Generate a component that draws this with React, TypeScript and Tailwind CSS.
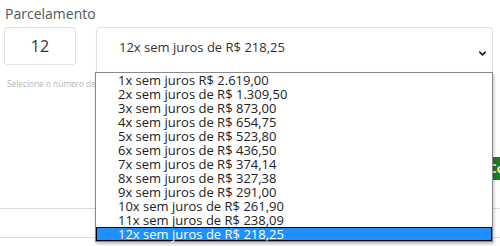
import { ChevronDown } from "lucide-react"

const parcelas = [
  "1x sem juros R$ 2.619,00",
  "2x sem juros de R$ 1.309,50",
  "3x sem juros de R$ 873,00",
  "4x sem juros de R$ 654,75",
  "5x sem juros de R$ 523,80",
  "6x sem juros de R$ 436,50",
  "7x sem juros de R$ 374,14",
  "8x sem juros de R$ 327,38",
  "9x sem juros de R$ 291,00",
  "10x sem juros de R$ 261,90",
  "11x sem juros de R$ 238,09",
  "12x sem juros de R$ 218,25",
]

export default function App() {
  const selected = 11

  return (
    <div className="relative h-[246px] w-[500px] overflow-hidden bg-white font-['Open_Sans',sans-serif] text-[#333]">
      <div className="pl-1 pr-[7px] pt-[4px]">
        <label className="block pl-[1px] text-[14px] leading-[20px] text-[#555]">Parcelamento</label>

        <div className="mt-[3px] flex items-start gap-[20px]">
          <div className="flex h-[38px] w-[72px] items-center justify-center rounded-[3px] border border-[#e2e2e2] text-[16px]">
            12
          </div>
          <div className="flex h-[46px] flex-1 items-center justify-between rounded-t-[4px] border border-b-0 border-[#e2e2e2] pl-[22px] pr-[4px] text-[13px] shadow-[0_1px_2px_rgba(0,0,0,0.06)]">
            <span className="pb-[6px]">12x sem juros de R$ 218,25</span>
            <ChevronDown className="mt-[5px] h-[11px] w-[11px] text-[#222]" strokeWidth={3.5} />
          </div>
        </div>

        <p className="mt-[5px] pl-[3px] text-[8.3px] leading-[12px] text-[#b5b5b5]">Selecione o número de parcelas</p>

        <div className="mt-[67px] flex justify-end">
          <button className="-mr-[60px] h-[23px] w-[66px] rounded-[2px] bg-[#1f7a25] pl-[2px] text-left text-[12px] font-bold text-[#f3f0d0]">
            Confirmar
          </button>
        </div>
      </div>

      <div className="mt-[28px] border-t border-[#dcdcdc]" />
      <div className="mt-[28px] border-t border-[#dcdcdc]" />

      <ul className="absolute left-[95px] top-[72px] w-[398px] border border-[#8a8a8a] bg-white text-[13px] leading-[14px] text-[#222] shadow-[1px_2px_3px_rgba(0,0,0,0.25)]">
        {parcelas.map((p, i) => (
          <li
            key={p}
            className={
              i === selected
                ? "h-[14px] border border-black bg-[#1e90ff] pl-[21px] leading-[12px] text-white"
                : "h-[14px] pl-[22px]"
            }
          >
            {p}
          </li>
        ))}
      </ul>
    </div>
  )
}
